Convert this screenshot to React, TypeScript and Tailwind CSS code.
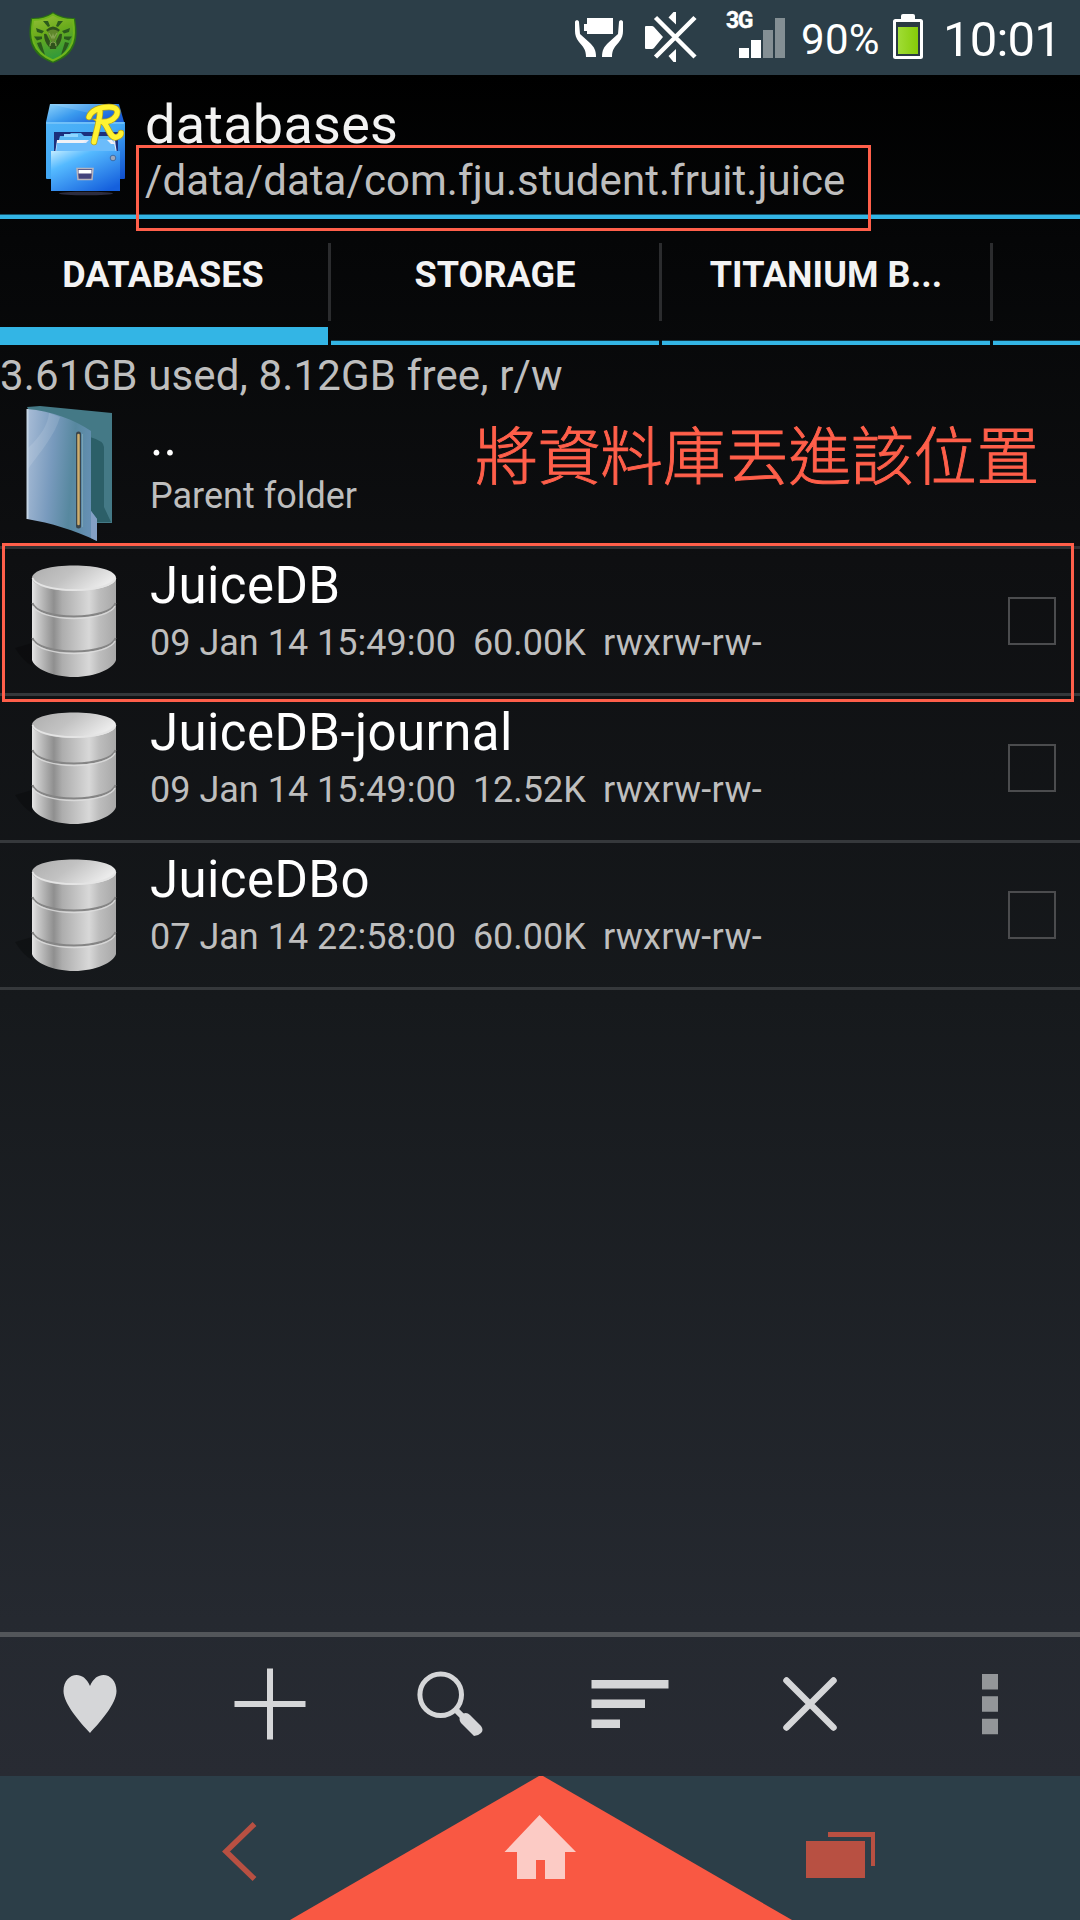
import React from 'react';

const TABS = ['DATABASES', 'STORAGE', 'TITANIUM B...'];

const FILES = [
  { name: 'JuiceDB', date: '09 Jan 14 15:49:00', size: '60.00K', mode: 'rwxrw-rw-', marked: true },
  { name: 'JuiceDB-journal', date: '09 Jan 14 15:49:00', size: '12.52K', mode: 'rwxrw-rw-', marked: false },
  { name: 'JuiceDBo', date: '07 Jan 14 22:58:00', size: '60.00K', mode: 'rwxrw-rw-', marked: false },
];

function ShieldIcon() {
  return (
    <svg className="ml-[28px] mt-[11px] h-[53px] w-[50px] shrink-0" viewBox="0 0 50 53">
      <defs>
        <linearGradient id="shield" x1="0" y1="0" x2="0.3" y2="1">
          <stop offset="0" stopColor="#98c03c" />
          <stop offset="0.45" stopColor="#6cac1c" />
          <stop offset="1" stopColor="#329a3a" />
        </linearGradient>
      </defs>
      <path d="M25 1C18 6 10 7 3 7 0 24-1 43 25 52 51 43 50 24 47 7 40 7 32 6 25 1Z" fill="#2a7014" />
      <path d="M25 3.500C19 7.500 11 9 5 9 2.500 25 3 40.500 25 49.500 47 40.500 47.500 25 45 9 39 9 31 7.500 25 3.500Z" fill="url(#shield)" stroke="#6fb51c" strokeWidth="2" />
      <path d="M15 10h5l2 5-2 1ZM35 10h-5l-2 5 2 1ZM8 17l8 3-2 2.500-5-1.500ZM42 17l-8 3 2 2.500 5-1.500ZM6 25.500l8 0v2.500l-5 1.500ZM44 25.500l-8 0v2.500l5 1.500ZM9 32l4-1 4 13Q11 39 9 32ZM41 32l-4-1-4 13Q39 39 41 32Z" fill="#2b5a1c" />
      <path d="M18 19q7-7 14 0l-2 2q-5-4-10 0ZM16 23q2-1 3 1l3 6-1 6q-5-5-5-13ZM34 23q-2-1-3 1l-3 6 1 6q5-5 5-13ZM21 33l4-4 4 4-1 5h-6Z" fill="#2f521c" />
      <path d="M20 20q5-3 10 0l-2 9-3 2-3-2Z" fill="#5f862b" />
      <path d="M21 22l3 5 1-3 1 3 3-5M22 35q0-4 3-4t3 4" fill="none" stroke="#84a352" strokeWidth="1.200" />
    </svg>
  );
}

function StatusIcons() {
  return (
    <svg className="h-[75px] w-[220px] shrink-0" viewBox="570 0 220 75">
      <g fill="#fff">
        <path d="M587 18h26v16h-26v-3h-3v-7h3Z" />
        <path d="M575 22c0-2.500 4-2.500 4 0l1 12 10 9c4 4 6 7 6 14h-10c0-8-3-10-7-15-3-4-4-7-4-11Z" />
        <path d="M623 22c0-2.500-4-2.500-4 0l-1 12-10 9c-4 4-6 7-6 14h10c0-8 3-10 7-15 3-4 4-7 4-11Z" />
        <path d="M646 26h6q1 0 2 1l9 10-9 11q-1 1-2 1h-6q-1 0-1-1V27q0-1 1-1ZM676 12v12.500l-7.500-7 5-5.500ZM676 62V49l-7.500 7 5 6Z" />
        <path d="M739 48h10v10h-10ZM751 40h10v18h-10Z" />
        <path d="M763 30h10v28h-10ZM775 18h10v40h-10Z" opacity=".42" />
      </g>
      <path d="M655.500 17.500 695 57M695 17.500 655.500 57" stroke="#fff" strokeWidth="4.500" />
    </svg>
  );
}

function BatteryIcon() {
  return (
    <svg className="h-[46px] w-[30px] shrink-0" viewBox="0 0 30 46">
      <defs>
        <linearGradient id="charge" x1="0" y1="0" x2="1" y2="0">
          <stop offset="0" stopColor="#a0dc35" />
          <stop offset="1" stopColor="#86cc08" />
        </linearGradient>
      </defs>
      <path d="M8 6V2q0-2 2-2h10q2 0 2 2v4Z" fill="#fff" />
      <rect x="1.500" y="6.500" width="27" height="37" rx="1" fill="#2b3a42" stroke="#fff" strokeWidth="3" />
      <rect x="5" y="13" width="20" height="27" fill="url(#charge)" />
    </svg>
  );
}

function CabinetIcon() {
  return (
    <svg className="ml-[44px] mt-[27px] h-[94px] w-[84px] shrink-0" viewBox="0 0 84 94">
      <defs>
        <linearGradient id="cabTop" x1="0" y1="0" x2="1" y2="0.5">
          <stop offset="0" stopColor="#8fd4fb" />
          <stop offset="0.5" stopColor="#3a9aee" />
          <stop offset="1" stopColor="#1a5fd8" />
        </linearGradient>
        <linearGradient id="cabBody" x1="0" y1="0" x2="1" y2="1">
          <stop offset="0" stopColor="#4fb4f8" />
          <stop offset="0.5" stopColor="#41a8f5" />
          <stop offset="1" stopColor="#0e4ccc" />
        </linearGradient>
        <linearGradient id="cabDrawer" x1="0" y1="0" x2="0.8" y2="1">
          <stop offset="0" stopColor="#c4ecff" />
          <stop offset="0.3" stopColor="#55baff" />
          <stop offset="1" stopColor="#1560dd" />
        </linearGradient>
      </defs>
      <ellipse cx="42" cy="91.500" rx="27" ry="1.800" fill="#2c2c3e" />
      <path d="M6 2h69l5 18H2Z" fill="url(#cabTop)" />
      <path d="M6 2h69l-30 9Z" fill="#fff" opacity=".15" />
      <path d="M2 20h79v56q0 1-1 1H3q-1 0-1-1Z" fill="url(#cabBody)" />
      <path d="M2 21h78" stroke="#7cc6fa" strokeWidth="1.500" />
      <path d="M10 30h64v23H10Z" fill="#1b2f7c" />
      <path d="M16 34h8l3-3h10l3 3h30v14H12Z" fill="#59b7f4" />
      <path d="M20 32h14v3H20Z" fill="#8fd6ff" />
      <path d="M13 38h58l2 14H11Z" fill="#e0e9fb" />
      <path d="M13 41h29l4-4h23l3 13H12Z" fill="#6bbcfb" />
      <path d="M13 38h29l-3 3H13ZM63 38h5l3 4h-4Z" fill="#f1f1f6" />
      <path d="M7 49h69v40H7Z" fill="url(#cabDrawer)" />
      <circle cx="69" cy="56" r="2.800" fill="#9da6b8" stroke="#3d6da7" />
      <path d="M33 66.500h16l-1 11H34Z" fill="#44437c" stroke="#b8b4bd" strokeWidth="1.500" />
      <path d="M34.500 68h13v3.500h-13Z" fill="#fff" />
      <path d="M45 15C47 9 55 5 65 5c8 0 10 4 7 9-3 4-8 6-13 6 5 3 7 18 14 15 3-1 4-3 4-4M56 9c0 10-4 21-6 31" fill="none" stroke="#b5a31d" strokeWidth="6.500" strokeLinecap="round" />
      <path d="M45 15C47 9 55 5 65 5c8 0 10 4 7 9-3 4-8 6-13 6 5 3 7 18 14 15 3-1 4-3 4-4M56 9c0 10-4 21-6 31" fill="none" stroke="#fff330" strokeWidth="5" strokeLinecap="round" />
    </svg>
  );
}

function FolderIcon() {
  return (
    <svg className="ml-[26px] mt-[2px] h-[138px] w-[90px] shrink-0" viewBox="0 0 90 138">
      <defs>
        <linearGradient id="folder" x1="0" y1="0" x2="1" y2="0.15">
          <stop offset="0" stopColor="#a9bdd7" />
          <stop offset="0.4" stopColor="#789abd" />
          <stop offset="0.7" stopColor="#57889f" />
          <stop offset="1" stopColor="#6690b4" />
        </linearGradient>
      </defs>
      <path d="M1 1l13-1 72 7v110H60Z" fill="#447986" />
      <path d="M64 31q14 4 14 10v60l7 15H64Z" fill="#2c5f68" />
      <path d="M1 3c25 2 48 11 64 22v80l6 8v22C48 124 25 117 1 113Z" fill="url(#folder)" />
      <path d="M65 25v80l6 8v22l-6-3v-26Z" fill="#83a0c5" />
      <path d="M2 42C15 30 22 18 23 7l11 4C29 29 15 45 2 63Z" fill="#fff" opacity=".12" />
      <path d="M1.500 3v110" stroke="#c5d5e5" strokeWidth="2" />
      <path d="M52.500 28v92" stroke="#39454b" strokeWidth="5" strokeLinecap="round" />
      <path d="M52.500 29v89" stroke="#cfae6d" strokeWidth="2.500" strokeLinecap="round" />
      <path d="M56.500 28v93" stroke="#78a2b4" strokeWidth="1" />
    </svg>
  );
}

function DatabaseIcon() {
  return (
    <svg className="ml-[14px] mt-[15px] h-[118px] w-[104px] shrink-0" viewBox="14 0 104 118">
      <defs>
        <linearGradient id="disk" x1="0" y1="0" x2="1" y2="0">
          <stop offset="0" stopColor="#e6e6e6" />
          <stop offset="0.06" stopColor="#cccccc" />
          <stop offset="0.26" stopColor="#8f8f8f" />
          <stop offset="0.36" stopColor="#adadad" />
          <stop offset="0.68" stopColor="#d8d8d8" />
          <stop offset="0.8" stopColor="#bdbdbd" />
          <stop offset="1" stopColor="#a8a8a8" />
        </linearGradient>
        <linearGradient id="lid" x1="0" y1="0" x2="1" y2="0.4">
          <stop offset="0" stopColor="#adadad" />
          <stop offset="0.5" stopColor="#c2c2c2" />
          <stop offset="1" stopColor="#ebebeb" />
        </linearGradient>
      </defs>
      <path d="M32 79l-17 5q8 13 17 18Z" fill="#000" opacity=".25" />
      <path d="M32 14v82c2 8 20 17 42 17s40-9 42-17V14Z" fill="url(#disk)" />
      <path d="M32 14c0 8 20 13 42 13s42-5 42-13S96 1.500 74 1.500 32 6 32 14Z" fill="url(#lid)" />
      <path d="M32.500 14c2 7 20 12 41.500 12s40-5 41.500-12" fill="none" stroke="#e4e4e4" strokeWidth="1.800" />
      <path d="M32.500 39c2 8 20 13.500 41.500 13.500s39.500-5.500 41.500-13.500M32.500 74c2 8 20 13.500 41.500 13.500s39.500-5.500 41.500-13.500" fill="none" stroke="#858585" strokeWidth="2" />
      <path d="M33 42c3 7 20 12.500 41 12.500s38-5.500 41-12.500M33 77c3 7 20 12.500 41 12.500s38-5.500 41-12.500" fill="none" stroke="#dedede" strokeWidth="1.500" opacity=".8" />
    </svg>
  );
}

function StatusBar() {
  return (
    <header className="flex h-[75px] shrink-0 bg-[#2c3e48] text-white">
      <ShieldIcon />
      <div className="relative ml-auto flex">
        <StatusIcons />
        <span className="absolute left-[156px] top-[8px] text-[23px] font-bold leading-[25px] tracking-[-1.5px] [-webkit-text-stroke:0.4px_white]">3G</span>
      </div>
      <span className="ml-[11px] mt-[15px] w-[92px] whitespace-nowrap text-[42px] leading-[50px] tracking-[0.3px]">90%</span>
      <div className="mt-[14px] flex">
        <BatteryIcon />
      </div>
      <span className="ml-[20px] mt-[12px] w-[137px] whitespace-nowrap text-[49px] leading-[56px] tracking-[-0.8px]">10:01</span>
    </header>
  );
}

function TitleBar() {
  return (
    <section className="relative flex h-[144px] shrink-0 border-b-4 border-[#33b5e5] shadow-[inset_0_-1px_0_#15566d]">
      <CabinetIcon />
      <div className="ml-[17px] flex flex-col whitespace-nowrap">
        <h1 className="mt-[20px] text-[54px] leading-[60px] tracking-[0.25px] text-[#f3f3f3]">databases</h1>
        <p className="mt-px text-[42px] leading-[50px] tracking-[0.06px] text-[#bebebe]">/data/data/com.fju.student.fruit.juice</p>
      </div>
      <div className="absolute left-[136px] top-[70px] h-[86px] w-[735px] border-[3px] border-[#ff5f4a]" />
    </section>
  );
}

function Tabs() {
  return (
    <nav className="flex h-[126px] shrink-0">
      {TABS.map((t, i) => (
        <React.Fragment key={t}>
          <div
            className={
              i === 0
                ? 'flex w-[328px] shrink-0 flex-col items-center border-b-[18px] border-[#33b5e5]'
                : 'flex w-[328px] shrink-0 flex-col items-center border-b-4 border-[#33b5e5] shadow-[inset_0_-1px_0_#123a4a]'
            }
          >
            <span className={i === 0 ? 'mr-[2px] mt-[35px] whitespace-nowrap text-[36px] font-bold leading-[42px] text-[#f3f3f3]' : 'mt-[35px] whitespace-nowrap text-[36px] font-bold leading-[42px] tracking-[0.1px] text-[#f3f3f3]'}>{t}</span>
          </div>
          <div className="mt-[24px] h-[78px] w-[3px] shrink-0 bg-[#2b2c2e]" />
        </React.Fragment>
      ))}
      <div className="flex-1 border-b-4 border-[#33b5e5] shadow-[inset_0_-1px_0_#123a4a]" />
    </nav>
  );
}

function FileList() {
  return (
    <main className="flex flex-1 flex-col">
      <p className="h-[59px] whitespace-nowrap pt-[6px] text-[42px] leading-[50px] tracking-[0.15px] text-[#bebebe]">3.61GB used, 8.12GB free, r/w</p>
      <div className="relative flex h-[145px] border-b-[3px] border-[#2e3033]">
        <FolderIcon />
        <div className="ml-[34px] flex flex-col whitespace-nowrap">
          <span className="mt-[4px] text-[51px] leading-[60px] text-white">..</span>
          <span className="mt-[7px] text-[36px] leading-[42px] text-[#bebebe]">Parent folder</span>
        </div>
        <p className="absolute left-[475px] top-[8px] whitespace-nowrap font-['Noto_Sans_CJK_TC',sans-serif] text-[62.7px] font-light leading-[80px] text-[#ff5f4a] [-webkit-text-stroke:0.9px_#ff5f4a]">將資料庫丟進該位置</p>
      </div>
      {FILES.map((f) => (
        <div key={f.name} className="relative flex h-[147px] border-b-[3px] border-[#35383b]">
          <DatabaseIcon />
          <div className="ml-[32px] flex flex-col whitespace-nowrap">
            <span className="mt-[7px] text-[51px] leading-[60px] tracking-[0.4px] text-white">{f.name}</span>
            <span className="mt-[2px] flex text-[36px] leading-[50px] text-[#bebebe]">
              <span>{f.date}</span>
              <span className="ml-[17px]">{f.size}</span>
              <span className="ml-[17px] tracking-[0.3px]">{f.mode}</span>
            </span>
          </div>
          <div className="ml-auto mr-[24px] mt-[48px] h-[48px] w-[48px] border-2 border-[#4b4c4e]" />
          {f.marked && (
            <div className="absolute left-[2px] top-[-6px] z-10 h-[159px] w-[1072px] border-[3px] border-[#ff5f4a]" />
          )}
        </div>
      ))}
    </main>
  );
}

function Toolbar() {
  return (
    <div className="grid h-[144px] shrink-0 grid-cols-6 border-t-[5px] border-[#53565a]">
      <svg className="h-[139px] w-[180px]" viewBox="0 1637 180 139">
        <path d="M90 1733C80 1722 63.500 1704 63.500 1691c0-17 19-23 26.500-5 7.500-18 26.500-12 26.500 5 0 13-16.500 31-26.500 42Z" fill="#d5d6d8" />
      </svg>
      <svg className="h-[139px] w-[180px]" viewBox="180 1637 180 139">
        <path d="M270 1668.500v71M234.500 1704h71" stroke="#d5d6d8" strokeWidth="6" />
      </svg>
      <svg className="h-[139px] w-[180px]" viewBox="360 1637 180 139" fill="none" stroke="#d5d6d8">
        <circle cx="440.700" cy="1694.800" r="20.800" strokeWidth="5" />
        <path d="M455 1709l10 10" strokeWidth="6" />
        <path d="M461 1715q5-4 9 0l11 11q3 4 0 7t-7 3l-13-13q-3-4 0-8Z" fill="#d5d6d8" stroke="none" />
      </svg>
      <svg className="h-[139px] w-[180px]" viewBox="540 1637 180 139">
        <path d="M591.500 1680h77v8.500h-77ZM591.500 1699.500h53.500v8.500h-53.500ZM591.500 1719.500h28.500v8.500h-28.500Z" fill="#d5d6d8" />
      </svg>
      <svg className="h-[139px] w-[180px]" viewBox="720 1637 180 139">
        <path d="M786.500 1680.500l47 47M833.500 1680.500l-47 47" stroke="#d5d6d8" strokeWidth="6.500" strokeLinecap="round" />
      </svg>
      <svg className="h-[139px] w-[180px]" viewBox="900 1637 180 139">
        <path d="M982 1674h16v15.500h-16ZM982 1696.300h16v15.500h-16ZM982 1718.700h16v15.500h-16Z" fill="#939699" />
      </svg>
    </div>
  );
}

function NavBar() {
  return (
    <footer className="flex h-[144px] shrink-0 bg-[#2c3e48]">
      <svg className="h-[144px] w-[1080px]" viewBox="0 1776 1080 144">
        <path d="M539 1776h4l249 144H290Z" fill="#f95843" />
        <path d="M254.500 1824 226 1851.500l28.500 27.500" fill="none" stroke="#b85042" strokeWidth="5.500" />
        <path d="M539.500 1815 576 1852H565v27h-20v-19h-9v19h-19v-27h-12.500Z" fill="#fccbc5" />
        <path d="M806 1841h59v37h-59ZM828 1832h47v34h-4v-29h-43Z" fill="#b85042" />
      </svg>
    </footer>
  );
}

export default function App() {
  return (
    <div className="flex h-[1920px] w-[1080px] flex-col overflow-hidden bg-[linear-gradient(180deg,#000_75px,#050607_240px,#0e0f11_560px,#16191c_1000px,#252930_1620px,#282b33_1776px)] font-['Roboto',sans-serif]">
      <StatusBar />
      <TitleBar />
      <Tabs />
      <FileList />
      <Toolbar />
      <NavBar />
    </div>
  );
}
